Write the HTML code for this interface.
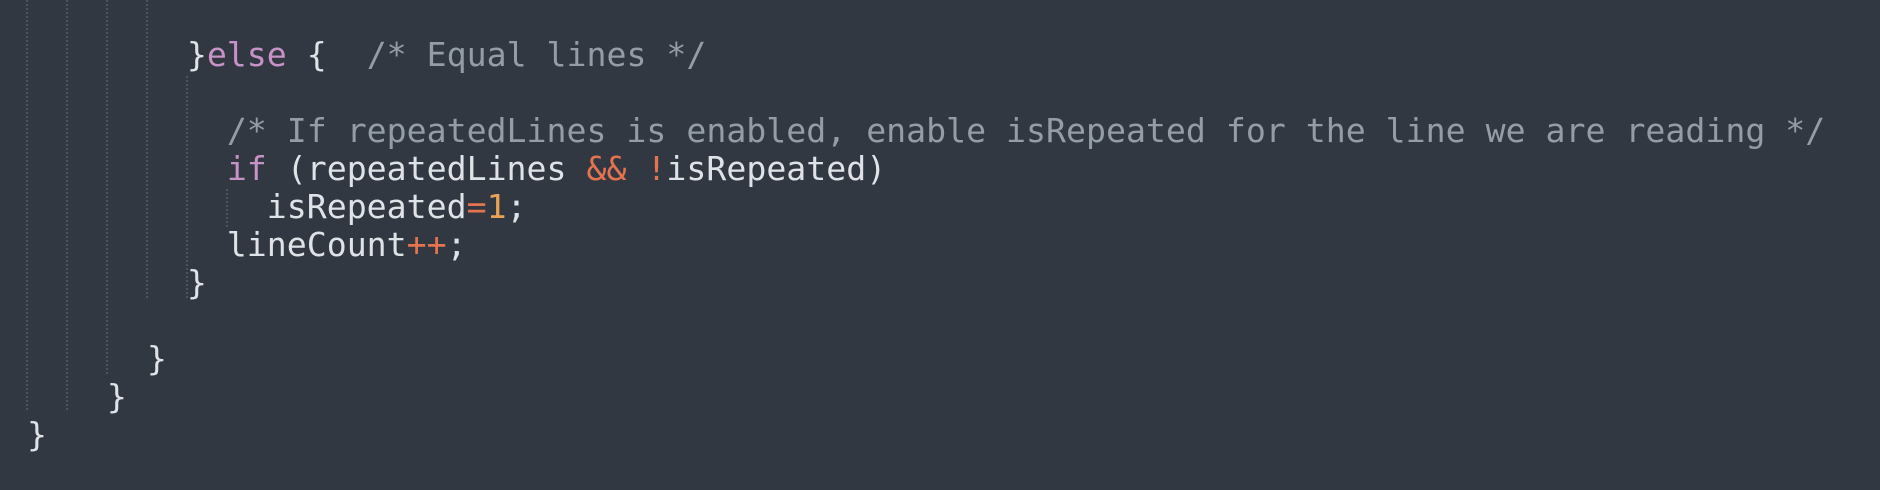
<!DOCTYPE html>
<html><head><meta charset="utf-8"><style>
html,body{margin:0;padding:0;background:#323842;width:1880px;height:490px;overflow:hidden}
.c{position:absolute;left:27px;top:0;font-family:"DejaVu Sans Mono","Liberation Mono",monospace;font-size:33.2px;color:#dfe3e8;white-space:pre}
.l{position:absolute;left:0;height:38px;line-height:38px}
.k{color:#c792c6}.cm{color:#949ca6}.o{color:#e5734f}.n{color:#e8a355}
.g{position:absolute;width:2px;background:repeating-linear-gradient(to bottom,#4e545e 0 2px,transparent 2px 4px)}
</style></head><body>
<div class="g" style="left:26px;top:0;height:412px"></div>
<div class="g" style="left:66px;top:0;height:412px"></div>
<div class="g" style="left:106px;top:0;height:376px"></div>
<div class="g" style="left:146px;top:0;height:300px"></div>
<div class="g" style="left:186px;top:76px;height:224px"></div>
<div class="g" style="left:226px;top:189px;height:38px"></div>
<div class="c">
<div class="l" style="top:36px">        }<span class="k">else</span> {  <span class="cm">/* Equal lines */</span></div>
<div class="l" style="top:112px">          <span class="cm">/* If repeatedLines is enabled, enable isRepeated for the line we are reading */</span></div>
<div class="l" style="top:150px">          <span class="k">if</span> (repeatedLines <span class="o">&amp;&amp;</span> <span class="o">!</span>isRepeated)</div>
<div class="l" style="top:188px">            isRepeated<span class="o">=</span><span class="n">1</span>;</div>
<div class="l" style="top:226px">          lineCount<span class="o">++</span>;</div>
<div class="l" style="top:264px">        }</div>
<div class="l" style="top:340px">      }</div>
<div class="l" style="top:378px">    }</div>
<div class="l" style="top:416px">}</div>
</div>
</body></html>
